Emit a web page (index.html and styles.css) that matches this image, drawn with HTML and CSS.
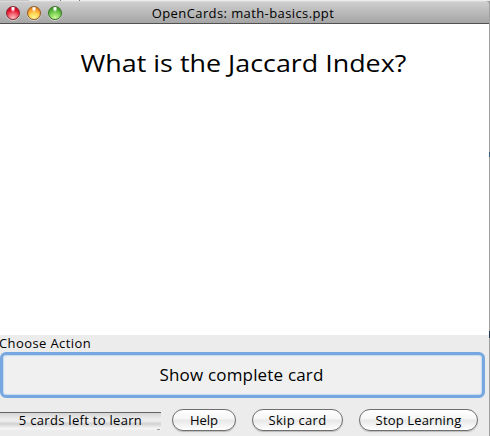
FILE: index.html
```html
<!DOCTYPE html>
<html lang="en">
<head>
<meta charset="utf-8">
<title>OpenCards: math-basics.ppt</title>
<link rel="stylesheet" href="styles.css">
</head>
<body>
<div class="backdrop"><span></span><i></i></div>
<div class="window">
  <header class="titlebar">
    <div class="lights"><span class="light red"></span><span class="light amber"></span><span class="light green"></span></div>
    <div class="title"><span>OpenCards: math-basics.ppt</span></div>
  </header>
  <main class="card"><h1>What is the Jaccard Index?</h1></main>
  <section class="panel">
    <div class="label">Choose Action</div>
    <button class="primary"><span>Show complete card</span></button>
    <footer class="actions">
      <div class="progress"><span>5 cards left to learn</span></div>
      <button class="pill help"><span>Help</span></button>
      <button class="pill skip"><span>Skip card</span></button>
      <button class="pill stop"><span>Stop Learning</span></button>
    </footer>
  </section>
</div>
</body>
</html>
```
FILE: styles.css
```css
* { box-sizing: border-box; }
body {
  margin: 0;
  width: 490px;
  height: 436px;
  overflow: hidden;
  background: linear-gradient(#a0a0a0 0 152px, #35608f 152px 157px, #a0a0a0 157px 331px, #1c3550 331px 338px, #a0a0a0 338px);
  font-family: "Open Sans", "Noto Sans", sans-serif;
  font-size: 13px;
  color: #000;
}
button { font: inherit; color: inherit; margin: 0; padding: 0; }
.backdrop { height: 1px; display: flex; background: #ececec; }
.backdrop span { width: 29px; background: #c8c8c8; }
.backdrop i { width: 20px; margin-left: 31px; border: solid #777; border-width: 0 1px; }
.window { width: 489px; height: 435px; display: flex; flex-direction: column; }
.titlebar {
  height: 23px;
  display: grid;
  grid-template-columns: 62px 1fr 65px;
  align-items: center;
  border-top: 1px solid #d9d9d9;
  border-bottom: 1px solid #515151;
  border-radius: 0 4px 0 0;
  background: linear-gradient(#cecece, #a5a5a5);
}
.lights { display: flex; gap: 7px; padding-left: 6px; }
.light {
  width: 14px;
  height: 14px;
  border-radius: 50%;
  box-shadow: 0 1px 0 rgba(255,255,255,.45);
}
.red { border: 1px solid #8b2930; background: radial-gradient(ellipse at 50% 8%, #fff 0 10%, transparent 28%), radial-gradient(circle at 50% 95%, #ffc5c5, #f36b78 35%, #e31431 65%, #b50a20); }
.amber { border: 1px solid #9a5a1e; background: radial-gradient(ellipse at 50% 8%, #fff 0 10%, transparent 28%), radial-gradient(circle at 50% 95%, #fffb9c, #ffd755 40%, #f5982a 70%, #b55c10); }
.green { border: 1px solid #3b7526; background: radial-gradient(ellipse at 50% 8%, #fff 0 10%, transparent 28%), radial-gradient(circle at 50% 95%, #d2ff9e, #87d75d 40%, #4eab35 70%, #2f7820); }
.title { text-align: center; line-height: 20px; white-space: nowrap; letter-spacing: .4px; }
.title span { display: inline-block; }
.card {
  height: 311px;
  padding: 23px 2px 0 0;
  background: #fff;
  display: flex;
  justify-content: center;
  align-items: flex-start;
}
.card h1 {
  margin: 0;
  font-size: 23px;
  line-height: 32px;
  font-weight: 400;
  white-space: nowrap;
  transform: scaleX(1.168);
}
.panel { flex: 1; background: #ececec; }
.label { height: 17px; line-height: 17px; text-indent: -1px; letter-spacing: .4px; }
.primary {
  display: block;
  width: 485px;
  height: 46px;
  border: 3px solid #6a9edb;
  border-color: #76a7df;
  border-radius: 6px;
  background: #f0f0f0;
  box-shadow: inset 0 0 1px 1px #c6daf2;
  font-size: 17px;
  letter-spacing: .18px;
}
.primary span { position: relative; top: -1px; left: -1px; }
.actions { display: flex; height: 38px; padding-top: 11px; }
.progress {
  width: 161px;
  height: 19px;
  margin-top: 3px;
  border-top: 1px solid #656565;
  background:
    linear-gradient(#999, #999) 157px 16px / 3px 1px no-repeat,
    linear-gradient(#d4d4d4, #eee 35%, #e9e9e9 48%, #d2d2d2 60%, #f5f5f5 85%, #ececec);
  text-align: center;
  line-height: 14px;
  letter-spacing: .3px;
}
.pill {
  height: 22px;
  border: 1px solid #6f6f6f;
  border-radius: 11px;
  background: linear-gradient(#fff, #f6f6f6 45%, #e7e7e7 50%, #fff);
  box-shadow: 0 1px 1px #bbb;
  line-height: 18px;
  white-space: nowrap;
}
.help { width: 64px; margin-left: 11px; }
.skip { width: 91px; margin-left: 16px; letter-spacing: .3px; }
.stop { width: 119px; margin-left: 16px; letter-spacing: .15px; }
```
